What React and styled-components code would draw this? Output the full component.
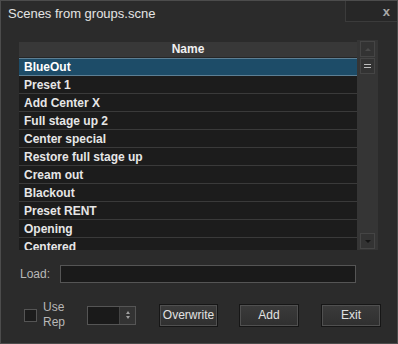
import React from "react";
import styled, { createGlobalStyle } from "styled-components";

const GlobalStyle = createGlobalStyle`
    html, body {
        margin: 0;
        padding: 0;
        background: #2b2b2b;
    }
    * {
        box-sizing: border-box;
    }
`

const Window = styled.div`
    width: 398px;
    height: 344px;
    background: #2b2b2b;
    border: 1px solid #4c4c4c;
    display: flex;
    flex-direction: column;
    font-family: "Liberation Sans", Arial, sans-serif;
    overflow: hidden;
`

const TitleBar = styled.div`
    height: 21px;
    display: flex;
    justify-content: space-between;
    align-items: stretch;
`

const Title = styled.div`
    color: #e4e4e4;
    font-size: 13px;
    padding: 5px 0 0 7px;
`

const CloseBox = styled.div`
    width: 52px;
    border-left: 1px solid #3b3b3b;
    border-bottom: 1px solid #3b3b3b;
    background: #272727;
    color: #a8a8a8;
    font-size: 13px;
    font-weight: bold;
    display: flex;
    justify-content: flex-end;
    align-items: center;
    padding-right: 7px;
`

const Body = styled.div`
    padding: 18px 0 0 18px;
    display: flex;
    flex-direction: column;
`

const ListArea = styled.div`
    display: flex;
    height: 210px;
`

const Table = styled.div`
    width: 338px;
    margin-top: 2px;
    background: #1c1c1c;
    overflow: hidden;
`

const Header = styled.div`
    height: 16px;
    background: #383838;
    border-bottom: 1px solid #262626;
    color: #f0f0f0;
    font-size: 12px;
    font-weight: bold;
    text-align: center;
    line-height: 15px;
`

const Row = styled.div`
    height: 18px;
    padding-left: 5px;
    font-size: 12px;
    font-weight: bold;
    line-height: 17px;
    color: ${p => (p.$selected ? "#ffffff" : "#e6e6e6")};
    background: ${p => (p.$selected ? "#1d4c68" : "#1c1c1c")};
    border-top: 1px solid ${p => (p.$selected ? "#5d7f94" : "transparent")};
    border-bottom: 1px solid ${p => (p.$selected ? "#5d7f94" : "#3a3a3a")};
    white-space: nowrap;
`

const ScrollTrack = styled.div`
    width: 21px;
    background: #353535;
    display: flex;
    flex-direction: column;
    justify-content: space-between;
    align-items: center;
    padding: 1px 0 1px 0;
`

const ScrollTop = styled.div`
    display: flex;
    flex-direction: column;
    gap: 1px;
`

const ScrollButton = styled.div`
    width: 15px;
    height: 16px;
    border: 1px solid #454545;
    background: #333333;
    display: flex;
    align-items: center;
    justify-content: center;
`

const Arrow = styled.div`
    width: 0;
    height: 0;
    border-left: 3px solid transparent;
    border-right: 3px solid transparent;
    ${p => (p.$down ? "border-top: 3px solid #151515;" : "border-bottom: 3px solid #4a4a4a;")}
`

const Grip = styled.div`
    width: 7px;
    height: 4px;
    border-top: 1px solid #bdbdbd;
    border-bottom: 1px solid #bdbdbd;
`

const LoadRow = styled.div`
    display: flex;
    align-items: center;
    margin-top: 15px;
    gap: 10px;
`

const Label = styled.span`
    color: #b8b8b8;
    font-size: 12px;
    padding-left: 1px;
`

const Input = styled.div`
    width: 296px;
    height: 18px;
    background: #1a1a1a;
    border: 1px solid #555555;
`

const BottomRow = styled.div`
    display: flex;
    align-items: center;
    margin-top: 17px;
    padding-left: 5px;
`

const Check = styled.div`
    width: 13px;
    height: 13px;
    background: #1c1c1c;
    border: 1px solid #555555;
`

const CheckLabel = styled.div`
    color: #b8b8b8;
    font-size: 12px;
    line-height: 15px;
    margin-left: 6px;
    width: 44px;
`

const Spin = styled.div`
    width: 49px;
    height: 19px;
    display: flex;
    border: 1px solid #555555;
    background: #1a1a1a;
`

const SpinField = styled.div`
    flex: 1;
`

const SpinArrows = styled.div`
    width: 16px;
    background: #333333;
    border-left: 1px solid #444444;
    display: flex;
    flex-direction: column;
    align-items: center;
    justify-content: center;
    gap: 2px;
`

const SpinArrow = styled.div`
    width: 0;
    height: 0;
    border-left: 2.5px solid transparent;
    border-right: 2.5px solid transparent;
    ${p => (p.$down ? "border-top: 3px solid #a0a0a0;" : "border-bottom: 3px solid #a0a0a0;")}
`

const Button = styled.button`
    width: ${p => p.$w}px;
    height: 23px;
    margin-left: ${p => p.$ml}px;
    background: linear-gradient(#3b3b3b, #2f2f2f);
    border: 1px solid #161616;
    box-shadow: inset 0 0 0 1px #505050;
    color: #e2e2e2;
    font-family: "Liberation Sans", Arial, sans-serif;
    font-size: 12px;
    padding: 0;
`

const scenes = [
    "BlueOut",
    "Preset 1",
    "Add Center X",
    "Full stage up 2",
    "Center special",
    "Restore full stage up",
    "Cream out",
    "Blackout",
    "Preset RENT",
    "Opening",
    "Centered",
]

export default function App() {
    return (
        <>
            <GlobalStyle />
            <Window>
                <TitleBar>
                    <Title>Scenes from groups.scne</Title>
                    <CloseBox>x</CloseBox>
                </TitleBar>
                <Body>
                    <ListArea>
                        <Table>
                            <Header>Name</Header>
                            {scenes.map((s, i) => (
                                <Row key={s} $selected={i === 0}>{s}</Row>
                            ))}
                        </Table>
                        <ScrollTrack>
                            <ScrollTop>
                                <ScrollButton><Arrow /></ScrollButton>
                                <ScrollButton><Grip /></ScrollButton>
                            </ScrollTop>
                            <ScrollButton><Arrow $down /></ScrollButton>
                        </ScrollTrack>
                    </ListArea>
                    <LoadRow>
                        <Label>Load:</Label>
                        <Input />
                    </LoadRow>
                    <BottomRow>
                        <Check />
                        <CheckLabel>Use<br />Rep</CheckLabel>
                        <Spin>
                            <SpinField />
                            <SpinArrows>
                                <SpinArrow />
                                <SpinArrow $down />
                            </SpinArrows>
                        </Spin>
                        <Button $w={59} $ml={23}>Overwrite</Button>
                        <Button $w={60} $ml={21}>Add</Button>
                        <Button $w={60} $ml={22}>Exit</Button>
                    </BottomRow>
                </Body>
            </Window>
        </>
    )
}
